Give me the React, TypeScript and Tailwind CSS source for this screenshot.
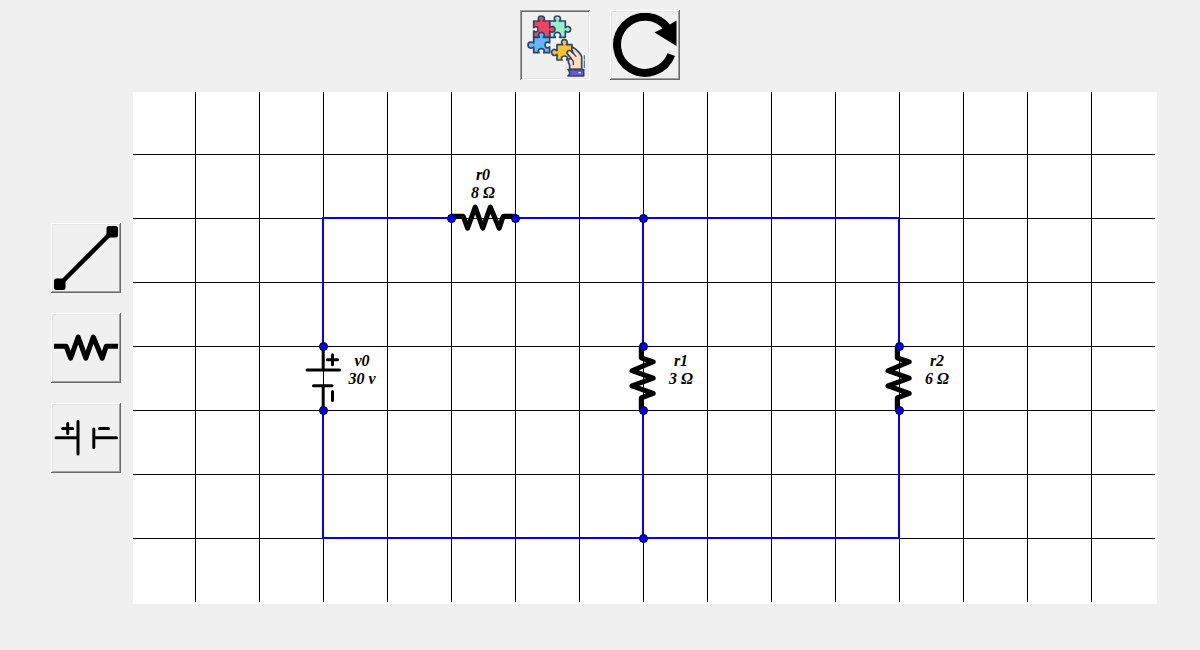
import { useState } from "react";
import type { ReactNode } from "react";

const CELL = 64;
const COLUMNS = 16;
const ROWS = 8;
const INSET = 2;

type Tool = "wire" | "resistor" | "battery";

function PuzzleIcon() {
  return (
    <svg viewBox="21 21 192 192" className="size-16" aria-hidden="true">
      <g stroke="#2a4568" strokeWidth="5" strokeLinejoin="round" strokeLinecap="round">
        <path
          fill="#97eec8"
          d="M101 45H119C112 39 114 30 124 30S136 39 130 45H148V65C154 59 164 61 164 70S154 81 148 75V94H131C136 87 133 79 124 79S112 87 118 94H101Z"
        />
        <path
          fill="#f04360"
          d="M53 45H71C64 39 66 30 76 30S88 39 82 45H101V65C107 59 117 61 117 70S107 81 101 75V94H53V75C60 80 66 78 66 70S60 60 53 65Z"
        />
        <path
          fill="#64b5f6"
          d="M53 94H70C65 87 68 79 76 79S88 87 82 94H101V111C94 106 87 109 87 117S94 128 101 123V140H83C87 133 84 128 76 128S65 133 69 140H53V123C47 129 36 127 36 117S47 106 53 111Z"
        />
        <path
          fill="#fbc133"
          d="M123 116H140C134 110 136 101 145 101S156 110 151 116H168V162H152C156 155 153 150 145 150S134 155 138 162H123V145C117 151 107 149 107 139S117 128 123 134Z"
        />
        <path
          fill="#ffdcc0"
          d="M170 124C178 128 197 144 197 154V190H161V178C157 172 156 166 157 159L166 158L153 142C152 134 160 131 166 136L172 142L168 132C167 127 168 124 170 124Z"
        />
        <path fill="none" strokeWidth="4" d="M172 142L180 151M166 158L172 166V176" />
        <path fill="#6a5acd" d="M156 191H203V210H156C163 205 163 197 156 191Z" />
        <path fill="none" strokeWidth="4" stroke="#5b7290" d="M205 149V159M205 165V184" />
        <path stroke="#f0efff" strokeWidth="4" d="M189 200H193" />
      </g>
    </svg>
  );
}

function ResetIcon() {
  return (
    <svg viewBox="0 0 64 64" className="size-16" aria-hidden="true">
      <path d="M54.5 15A28 28 0 1 0 58.3 41.6" fill="none" stroke="#000" strokeWidth="8" />
      <path d="M63.5 7.5V33L41.5 19.5L49.5 15.5L56 12Z" />
    </svg>
  );
}

function WireIcon() {
  return (
    <svg viewBox="0 0 64 64" className="size-16" aria-hidden="true">
      <path d="M6 58L58 6" stroke="#000" strokeWidth="4.5" />
      <rect x="0" y="52.5" width="11.5" height="11.5" rx="2.5" />
      <rect x="52.5" y="0" width="11.5" height="11.5" rx="2.5" />
    </svg>
  );
}

function ResistorGlyph() {
  return (
    <path
      d="M0 30.3H12.2L16.6 42.2L24.2 21L31.8 42.2L39.3 21L48.2 42.2L52.2 30.3H64"
      fill="none"
      stroke="#000"
      strokeWidth="5"
      strokeLinejoin="round"
    />
  );
}

function BatteryGlyph() {
  return (
    <path
      d="M2 31.8H24M24 15.5V48M39.8 23V41.5M40 31.8H62.5M8.7 22.5H18.7M13.7 17.5V27.5M45.5 22.5H54.5"
      fill="none"
      stroke="#000"
      strokeWidth="3"
      strokeLinecap="round"
    />
  );
}

function ToolButton({
  label,
  pressed,
  onClick,
  children,
}: {
  label: string;
  pressed: boolean;
  onClick: () => void;
  children: ReactNode;
}) {
  const relief = pressed
    ? "shadow-[inset_1px_1px_0_#a0a0a0,inset_-1px_-1px_0_#ffffff,inset_2px_2px_0_#696969,inset_-2px_-2px_0_#e3e3e3]"
    : "shadow-[inset_-1px_-1px_0_#696969,inset_1px_1px_0_#ffffff,inset_-2px_-2px_0_#a0a0a0,inset_2px_2px_0_#e3e3e3]";
  return (
    <button
      type="button"
      aria-label={label}
      aria-pressed={pressed}
      onClick={onClick}
      className={`flex size-[70px] shrink-0 items-center justify-center bg-[#f0f0f0] ${relief}`}
    >
      {children}
    </button>
  );
}

const wires = [
  "M320 128H192V256",
  "M384 128H768V256",
  "M512 128V256",
  "M192 320V448H768V320",
  "M512 320V448",
];

const nodes = [
  [320, 128],
  [384, 128],
  [512, 128],
  [192, 256],
  [192, 320],
  [512, 256],
  [512, 320],
  [768, 256],
  [768, 320],
  [512, 448],
];

const labels = [
  { name: "r0", value: "8 Ω", x: 352, y: 90 },
  { name: "v0", value: "30 v", x: 231, y: 276 },
  { name: "r1", value: "3 Ω", x: 550, y: 276 },
  { name: "r2", value: "6 Ω", x: 806, y: 276 },
];

function Circuit() {
  const width = COLUMNS * CELL;
  const height = ROWS * CELL;
  const columns = Array.from({ length: COLUMNS - 1 }, (_, i) => (i + 1) * CELL + 0.5);
  const rows = Array.from({ length: ROWS - 1 }, (_, i) => (i + 1) * CELL + 0.5);

  return (
    <svg
      role="img"
      aria-label="Circuit"
      viewBox={`${INSET} ${INSET} ${width} ${height}`}
      className="w-full max-w-5xl min-w-0 bg-white"
    >
      <g transform="translate(320 96)">
        <ResistorGlyph />
      </g>
      <g transform="translate(480 320) rotate(-90)">
        <ResistorGlyph />
      </g>
      <g transform="translate(736 320) rotate(-90)">
        <ResistorGlyph />
      </g>
      <g transform="translate(224 256) rotate(90)">
        <BatteryGlyph />
      </g>

      <g stroke="#000" strokeWidth="1">
        {columns.map((x) => (
          <line key={x} x1={x} x2={x} y1={0} y2={height} />
        ))}
        {rows.map((y) => (
          <line key={y} x1={0} x2={width} y1={y} y2={y} />
        ))}
      </g>

      <g fill="none" stroke="#0000ff" strokeWidth="2">
        {wires.map((d) => (
          <path key={d} d={d} />
        ))}
      </g>

      <g fill="#0000ff" stroke="#000" strokeWidth="1">
        {nodes.map(([x, y]) => (
          <circle key={`${x}-${y}`} cx={x + 0.5} cy={y + 0.5} r="4" />
        ))}
      </g>

      <g className="font-['Liberation_Serif',serif] text-[16px] font-bold italic" textAnchor="middle">
        {labels.map(({ name, value, x, y }) => (
          <g key={name}>
            <text x={x} y={y}>
              {name}
            </text>
            <text x={x} y={y + 18}>
              {value}
            </text>
          </g>
        ))}
      </g>
    </svg>
  );
}

export default function App() {
  const [moving, setMoving] = useState(true);
  const [tool, setTool] = useState<Tool | null>(null);

  const choose = (next: Tool) => {
    setTool(next);
    setMoving(false);
  };

  return (
    <div className="flex min-h-screen flex-col gap-3 bg-[#f0f0f0] pt-2.5">
      <header className="flex justify-center gap-5">
        <ToolButton
          label="Edit components"
          pressed={moving}
          onClick={() => {
            setMoving(!moving);
            setTool(null);
          }}
        >
          <PuzzleIcon />
        </ToolButton>
        <ToolButton
          label="Reset"
          pressed={false}
          onClick={() => {
            setMoving(true);
            setTool(null);
          }}
        >
          <ResetIcon />
        </ToolButton>
      </header>

      <main className="flex items-center justify-center gap-3 pl-2">
        <nav aria-label="Components" className="flex flex-col gap-5">
          <ToolButton label="Wire" pressed={tool === "wire"} onClick={() => choose("wire")}>
            <WireIcon />
          </ToolButton>
          <ToolButton label="Resistor" pressed={tool === "resistor"} onClick={() => choose("resistor")}>
            <svg viewBox="0 0 64 64" className="size-16" aria-hidden="true">
              <ResistorGlyph />
            </svg>
          </ToolButton>
          <ToolButton label="Battery" pressed={tool === "battery"} onClick={() => choose("battery")}>
            <svg viewBox="0 0 64 64" className="size-16" aria-hidden="true">
              <BatteryGlyph />
            </svg>
          </ToolButton>
        </nav>
        <Circuit />
      </main>
    </div>
  );
}
